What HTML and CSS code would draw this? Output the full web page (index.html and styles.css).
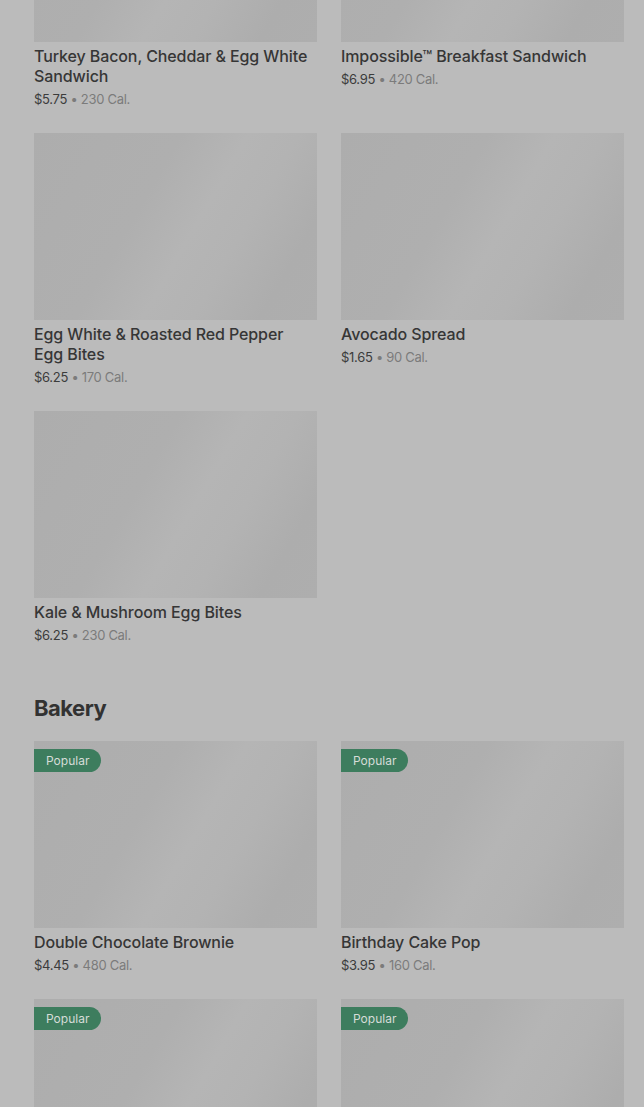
FILE: index.html
```html
<!DOCTYPE html>
<html lang="en">
<head>
<meta charset="utf-8">
<title>Menu</title>
<link rel="stylesheet" href="styles.css">
</head>
<body>
<main class="menu">
  <section class="section section-first">
    <div class="grid">
      <article class="card">
        <div class="thumb"></div>
        <h3 class="name">Turkey Bacon, Cheddar &amp; Egg White Sandwich</h3>
        <p class="meta"><span class="price">$5.75</span> <span class="cal">• 230 Cal.</span></p>
      </article>
      <article class="card">
        <div class="thumb"></div>
        <h3 class="name">Impossible™ Breakfast Sandwich</h3>
        <p class="meta"><span class="price">$6.95</span> <span class="cal">• 420 Cal.</span></p>
      </article>
      <article class="card">
        <div class="thumb"></div>
        <h3 class="name">Egg White &amp; Roasted Red Pepper Egg Bites</h3>
        <p class="meta"><span class="price">$6.25</span> <span class="cal">• 170 Cal.</span></p>
      </article>
      <article class="card">
        <div class="thumb"></div>
        <h3 class="name">Avocado Spread</h3>
        <p class="meta"><span class="price">$1.65</span> <span class="cal">• 90 Cal.</span></p>
      </article>
      <article class="card">
        <div class="thumb"></div>
        <h3 class="name">Kale &amp; Mushroom Egg Bites</h3>
        <p class="meta"><span class="price">$6.25</span> <span class="cal">• 230 Cal.</span></p>
      </article>
    </div>
  </section>
  <section class="section">
    <h2 class="section-title">Bakery</h2>
    <div class="grid">
      <article class="card">
        <div class="thumb"><span class="badge">Popular</span></div>
        <h3 class="name">Double Chocolate Brownie</h3>
        <p class="meta"><span class="price">$4.45</span> <span class="cal">• 480 Cal.</span></p>
      </article>
      <article class="card">
        <div class="thumb"><span class="badge">Popular</span></div>
        <h3 class="name">Birthday Cake Pop</h3>
        <p class="meta"><span class="price">$3.95</span> <span class="cal">• 160 Cal.</span></p>
      </article>
      <article class="card">
        <div class="thumb"><span class="badge">Popular</span></div>
      </article>
      <article class="card">
        <div class="thumb"><span class="badge">Popular</span></div>
      </article>
    </div>
  </section>
</main>
</body>
</html>
```

FILE: styles.css
```css
html, body {
  margin: 0;
  padding: 0;
  background: #bbbbbb;
  overflow: hidden;
}

body {
  font-family: Inter, "Noto Sans", "Liberation Sans", sans-serif;
  color: #363636;
  height: 1107px;
}

.menu {
  padding: 0 20px 0 34px;
}

.section-first {
  margin-top: -145px;
}

.section {
  display: flex;
  flex-direction: column;
}

.section + .section {
  margin-top: 47px;
}

.section-title {
  margin: 0 0 17px;
  font-size: 22px;
  line-height: 32px;
  font-weight: 700;
  letter-spacing: -0.5px;
  color: #323232;
}

.grid {
  display: grid;
  grid-template-columns: 283px 283px;
  column-gap: 24px;
  row-gap: 24px;
  align-items: start;
}

.card {
  display: flex;
  flex-direction: column;
}

.thumb {
  position: relative;
  height: 187px;
  background: linear-gradient(120deg, #adadad 0%, #afafaf 38%, #b5b5b5 55%, #b3b3b3 68%, #adadad 85%, #aeaeae 100%);
}

.badge {
  position: absolute;
  top: 8px;
  left: 0;
  height: 23px;
  line-height: 23px;
  padding: 0 12px;
  font-size: 12px;
  color: #d6dcd8;
  background: #3d7d5e;
  border-radius: 0 12px 12px 0;
}

.name {
  margin: 4px 0 0;
  padding-right: 8px;
  font-size: 16px;
  line-height: 20px;
  font-weight: 500;
  color: #363636;
  letter-spacing: -0.1px;
}

.meta {
  margin: 3px 0 0;
  font-size: 13px;
  line-height: 20px;
  letter-spacing: -0.3px;
}

.price {
  color: #3c3c3c;
}

.cal {
  color: #7b7b7b;
}
```
